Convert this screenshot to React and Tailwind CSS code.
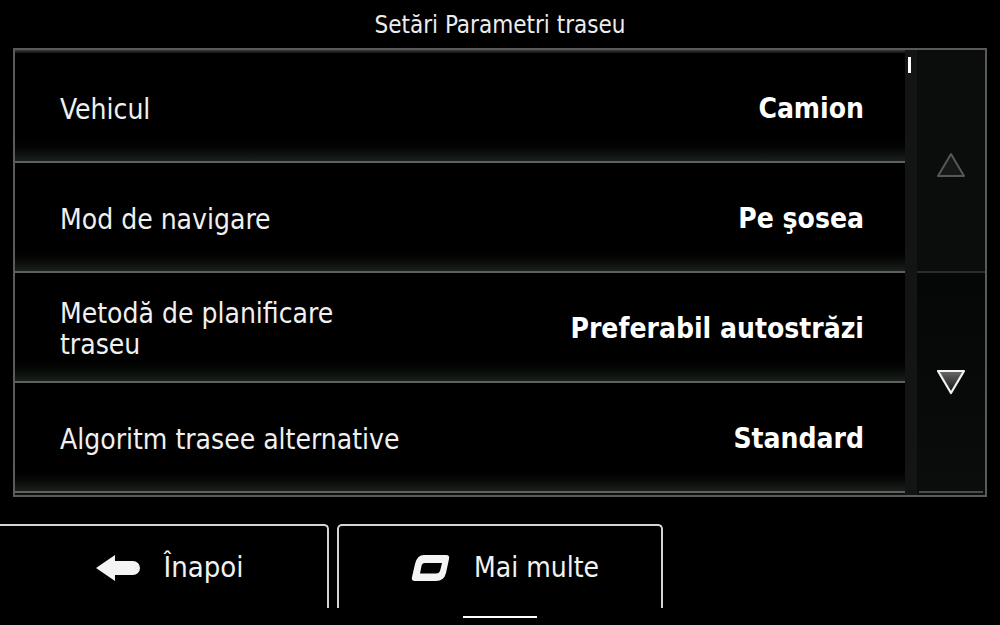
const rows = [
  { label: "Vehicul", value: "Camion" },
  { label: "Mod de navigare", value: "Pe şosea" },
  { label: "Metodă de planificare traseu", value: "Preferabil autostrăzi" },
  { label: "Algoritm trasee alternative", value: "Standard" },
];

const font = { fontFamily: '"DejaVu Sans Condensed", "DejaVu Sans", sans-serif' };

const Row = ({ label, value }) => (
  <div className="flex flex-col h-[110px]">
    <div className="flex-1 flex items-center justify-between pl-[45px] pr-[41px] pt-[4px] bg-gradient-to-b from-black from-75% to-[#1a201c]">
      <div className="text-[28px] leading-[31px] text-[#f0f0f0] max-w-[340px]">{label}</div>
      <div className="text-[28px] font-bold text-white">{value}</div>
    </div>
    <div className="h-[2px] bg-[#5e615e]" />
  </div>
);

const App = () => {
  return (
    <div className="w-[1000px] h-[625px] bg-black flex flex-col overflow-hidden" style={font}>
      <div className="h-[48px] pt-[2px] flex items-center justify-center text-[24px] text-[#ececec]">
        Setări Parametri traseu
      </div>

      <div className="mx-[13px] h-[449px] border-2 border-[#5a5a5a] flex">
        <div className="flex-1 flex flex-col">
          <div className="h-[3px] bg-gradient-to-b from-[#3a3c3a] to-[#111]" />
          {rows.map((r) => (
            <Row key={r.label} {...r} />
          ))}
          <div className="flex-1 bg-[#0c0f0d]" />
        </div>

        <div className="w-[12px] bg-[#121513] relative">
          <div className="absolute left-[3px] top-[7px] w-[3px] h-[16px] bg-white" />
        </div>

        <div className="w-[68px] bg-[#0b0d0c] flex flex-col">
          <div className="h-[221px] flex items-center justify-center pt-[8px]">
            <svg width="30" height="26" viewBox="0 0 30 26">
              <path d="M15 2 L28 24 L2 24 Z" fill="#151816" stroke="#555855" strokeWidth="2" strokeLinejoin="round" />
            </svg>
          </div>
          <div className="h-[2px] bg-[#2a2d2b]" />
          <div className="h-[218px] flex items-center justify-center bg-gradient-to-b from-[#050606] to-[#0b0d0c]">
            <svg width="30" height="26" viewBox="0 0 30 26">
              <defs>
                <linearGradient id="dg" x1="0" y1="0" x2="0" y2="1">
                  <stop offset="0" stopColor="#6a6a6a" />
                  <stop offset="1" stopColor="#111" />
                </linearGradient>
              </defs>
              <path d="M2 2 L28 2 L15 24 Z" fill="url(#dg)" stroke="#f2f2f2" strokeWidth="2.2" strokeLinejoin="round" />
            </svg>
          </div>
          <div className="h-[2px] mx-[2px] bg-[#4a4d4b]" />
          <div className="flex-1" />
        </div>
      </div>

      <div className="mt-[27px] flex items-start">
        <div className="w-[329px] h-[84px] shrink-0 border-t-2 border-r-2 border-[#d4d4d4] rounded-tr-[5px] flex items-center justify-center gap-[24px] pl-[12px] pt-[1px]">
          <svg width="44" height="26" viewBox="0 0 44 26">
            <path d="M0 13 L19 0 L19 6 L37 6 A7 7 0 0 1 37 20 L19 20 L19 26 Z" fill="#f4f4f4" />
          </svg>
          <span className="text-[29px] text-[#f2f2f2]">Înapoi</span>
        </div>
        <div className="ml-[8px] w-[326px] flex flex-col items-center shrink-0">
          <div className="w-full h-[84px] shrink-0 border-t-2 border-x-2 border-[#d4d4d4] rounded-t-[5px] flex items-center justify-center gap-[24px] pl-[10px] pt-[1px]">
            <svg width="39" height="28" viewBox="0 0 39 28">
              <path d="M13 1 L35 1 Q39 1 38 5 L35 19 Q33 27 25 27 L4 27 Q0 27 1 23 L4 10 Q6 1 13 1 Z M14 9 Q11 9 10.5 12 L9 19.5 L25 19.5 Q28.5 19.5 29.3 16 L31 9 Z" fill="#f4f4f4" fillRule="evenodd" />
            </svg>
            <span className="text-[28px] text-[#f2f2f2]">Mai multe</span>
          </div>
          <div className="mt-[8px] w-[74px] h-[2px] bg-white" />
        </div>
      </div>
    </div>
  );
};

export default App;
